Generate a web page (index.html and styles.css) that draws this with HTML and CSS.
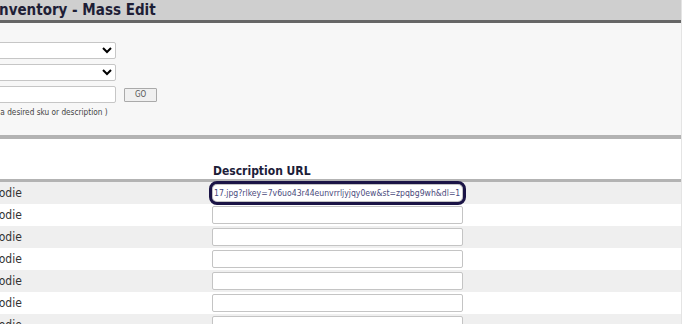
FILE: index.html
```html
<!DOCTYPE html>
<html lang="en">
<head>
  <meta charset="UTF-8">
  <title>Inventory - Mass Edit</title>
  <link rel="stylesheet" href="styles.css">
</head>
<body>
  <div class="frame">
    <div class="sheet">
      <h1 class="title">Inventory - Mass Edit</h1>

      <form class="filters">
        <select class="field"><option></option></select>
        <select class="field"><option></option></select>
        <div class="search">
          <input type="text" class="field">
          <button type="button" class="go">GO</button>
        </div>
        <p class="hint">( Enter a desired sku or description )</p>
      </form>

      <div class="grid">
        <div class="grid-head">
          <span></span>
          <span class="col-url">Description URL</span>
        </div>
        <div class="row">
          <span class="name">Hoodie</span>
          <input type="text" class="url active" value="17.jpg?rlkey=7v6uo43r44eunvrrljyjqy0ew&amp;st=zpqbg9wh&amp;dl=1">
        </div>
        <div class="row">
          <span class="name">Hoodie</span>
          <input type="text" class="url">
        </div>
        <div class="row">
          <span class="name">Hoodie</span>
          <input type="text" class="url">
        </div>
        <div class="row">
          <span class="name">Hoodie</span>
          <input type="text" class="url">
        </div>
        <div class="row">
          <span class="name">Hoodie</span>
          <input type="text" class="url">
        </div>
        <div class="row">
          <span class="name">Hoodie</span>
          <input type="text" class="url">
        </div>
        <div class="row">
          <span class="name">Hoodie</span>
          <input type="text" class="url">
        </div>
      </div>
    </div>
  </div>
</body>
</html>
```

FILE: styles.css
```css
body {
  margin: 0;
  background: #fff;
  font-family: 'DejaVu Sans Condensed', 'DejaVu Sans', sans-serif;
  color: #333;
}

.frame {
  width: 681px;
  height: 324px;
  overflow: hidden;
  border-right: 1px solid #e4e4e4;
}

.sheet {
  margin-left: -40px;
  width: 721px;
}

.title {
  margin: 0;
  height: 20px;
  line-height: 21px;
  padding-left: 34px;
  background: #cfcfcf;
  border-bottom: 3px solid #666;
  font-size: 15px;
  font-weight: bold;
  color: #1e1e36;
}

.filters {
  margin: 0;
  height: 93px;
  padding: 19px 0 0 10px;
  background: #f7f7f7;
  border-bottom: 4px solid #b3b3b3;
}

.field {
  display: block;
  box-sizing: border-box;
  width: 146px;
  height: 17px;
  margin: 0 0 5px;
  border: 1px solid #c6c6c6;
  border-radius: 2px;
  background: #fff;
  font-size: 10px;
}

.search {
  display: flex;
  align-items: center;
}

.search .field {
  margin: 0;
}

.go {
  margin-left: 8px;
  width: 33px;
  height: 14px;
  padding: 0;
  border: 1px solid #aaa;
  border-radius: 1px;
  background: #f0f0f0;
  font-family: inherit;
  font-size: 8px;
  color: #555;
}

.hint {
  margin: 3px 0 0 3px;
  font-size: 8.2px;
  line-height: 12px;
  color: #444;
}

.grid-head {
  display: grid;
  grid-template-columns: 252px 1fr;
  height: 40px;
  align-items: end;
  border-bottom: 3px solid #b3b3b3;
}

.col-url {
  padding: 0 0 1px 1px;
  font-size: 12px;
  line-height: 14px;
  font-weight: bold;
  color: #1c2038;
}

.row {
  display: grid;
  grid-template-columns: 252px 251px;
  height: 22px;
  align-items: center;
}

.row:nth-child(even) {
  background: #efefef;
}

.name {
  padding-left: 24px;
  font-size: 12px;
}

.url {
  box-sizing: border-box;
  width: 251px;
  height: 18px;
  padding: 0 1px;
  border: 1px solid #c4c4c4;
  border-radius: 2px;
  background: #fff;
  font-family: inherit;
  font-size: 8.6px;
  color: #4a4a7c;
}

.url.active {
  outline: 3px solid #1b1446;
  outline-offset: 0;
  border-radius: 5px;
}
```
